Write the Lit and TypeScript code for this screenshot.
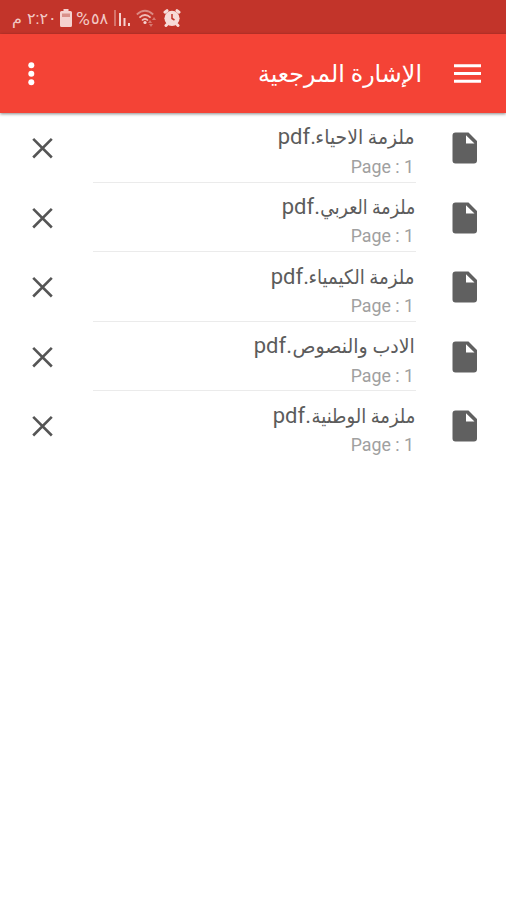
import { LitElement, html, css } from "lit";
import { customElement } from "lit/decorators.js";
import { styleMap } from "lit/directives/style-map.js";

interface Entry { name: string; width: number; scale: number; page: number }

// width: room taken by the Arabic part of the name; scale: its horizontal condensing
const FILES: Entry[] = [
  { name: "ملزمة الاحياء", width: 99, scale: 0.94, page: 1 },
  { name: "ملزمة العربي", width: 95, scale: 0.87, page: 1 },
  { name: "ملزمة الكيمياء", width: 106, scale: 0.91, page: 1 },
  { name: "الادب والنصوص", width: 123, scale: 0.95, page: 1 },
  { name: "ملزمة الوطنية", width: 104, scale: 0.9, page: 1 },
];

@customElement("app-root")
export class AppRoot extends LitElement {
  static styles = css`
    :host { display: block; width: 506px; height: 900px; background: #fff; overflow: hidden; font-family: Roboto, "DejaVu Sans", sans-serif; }
    svg { display: block; flex: none; }
    .status { height: 34px; background: #c2342a; color: #f2c9c5; display: flex; align-items: center; padding: 2px 0 0 12px; box-sizing: border-box; white-space: nowrap; }
    .pm { width: 15px; font-size: 16px; }
    .time { width: 33px; font-size: 16px; }
    .battery { margin-right: 4px; }
    .charge { width: 38px; display: flex; align-items: center; font-size: 16px; }
    .percent { width: 15px; font-size: 19px; }
    .signal { margin-right: 5px; }
    .wifi { margin-right: 6px; }
    .bar { height: 79px; background: #f44336; box-shadow: 0 1px 3px #0007; display: flex; align-items: center; color: #fff; position: relative; padding: 0 25px 0 27px; box-sizing: border-box; }
    .title { flex: 1; font-size: 23.8px; line-height: 30px; text-align: right; padding-right: 32px; }
    .row { display: grid; grid-template-columns: 93px 323px 90px; height: 69.6px; }
    .close { margin: 24px 0 0 32px; }
    .doc { margin: 19px 0 0 36px; }
    .info { border-bottom: 1px solid #ebebeb; box-sizing: border-box; padding: 9.4px 1px 0 0; }
    .row:last-child .info { border-bottom: 0; }
    .name { display: flex; height: 30px; line-height: 30px; align-items: baseline; color: #5c5c5c; white-space: nowrap; }
    .arabic { font-size: 20px; display: block; }
    .stretch { display: inline-block; transform-origin: right; }
    .ext { font-size: 22px; }
    .page { font-size: 17.8px; line-height: 24px; height: 24px; margin-top: 2.4px; text-align: right; color: #a0a0a0; padding-right: 1px; }
  `;
  private row(f: Entry) {
    return html`
      <div class="row">
        <svg class="close" width="21" height="22" viewBox="0 0 21 22"><path d="M1.200 1.900 19.800 20.500M19.800 1.900 1.200 20.500" fill="none" stroke="#555" stroke-width="2.600"/></svg>
        <div class="info">
          <div class="name" dir="rtl">
            <span class="arabic" style=${styleMap({ width: `${f.width}px` })}><span class="stretch" style=${styleMap({ transform: `scaleX(${f.scale})` })}>${f.name}</span></span><span class="ext">.pdf</span>
          </div>
          <div class="page">Page : ${f.page}</div>
        </div>
        <svg class="doc" width="26" height="32" viewBox="0 0 26 32"><path fill-rule="evenodd" fill="#606060" d="M3.500.500H16.500L25 9V28.500Q25 31.500 22 31.500H3.500Q.500 31.500 .500 28.500V3.500Q.500.500 3.500.500ZM14 3.300V11.500H22.500Z"/></svg>
      </div>`;
  }
  render() {
    return html`
      <div class="status">
        <span class="pm">م</span><span class="time">٢:٢٠</span>
        <svg class="battery" width="12" height="18" viewBox="0 0 12 18"><path fill="#f5d2cf" d="M3.500 0H8.500V2H10.500Q12 2 12 3.500V16.500Q12 18 10.500 18H1.500Q0 18 0 16.500V3.500Q0 2 1.500 2H3.500Z"/><path fill="#d99089" d="M2 4.500H10V8H2Z"/></svg>
        <span class="charge"><span class="percent">%</span><span>٥٨</span></span>
        <svg class="signal" width="17" height="18" viewBox="0 0 17 18"><path stroke="#dc8a83" stroke-width="1.500" d="M1 1V17"/><path stroke="#f5d2cf" stroke-width="2" d="M6 4V17M10.500 9V17M15 14V17"/></svg>
        <svg class="wifi" width="21" height="18" viewBox="0 0 21 18"><g fill="none" stroke="#efbcb7" stroke-width="1.700"><path stroke="#dc8a83" d="M.8 5.500Q9 -2 17.200 5.500"/><path d="M3.400 8.700Q9 3.300 14.600 8.700M6 11.500Q9 8.500 12 11.500"/></g><circle cx="9" cy="13.500" r="1.600" fill="#f5d2cf"/><path fill="#d8786f" d="M12 14l2-3 2 3ZM13 15h4l-2 3ZM18 8l2 3h-4Z"/></svg>
        <svg width="18" height="18" viewBox="0 0 18 18"><g stroke="#f7dbd8" stroke-width="3" stroke-linecap="round"><path d="M2 3.200 4 1.700M16 3.200 14 1.700M4 15.500 3 16.500M14 15.500 15 16.500"/></g><circle cx="9" cy="9.300" r="7.600" fill="#f7dbd8"/><path d="M9 5V9.500L11.500 11" fill="none" stroke="#c2342a" stroke-width="1.500"/></svg>
      </div>
      <div class="bar">
        <svg width="9" height="24" viewBox="0 0 9 24" fill="#fff"><circle cx="4.300" cy="3.300" r="3"/><circle cx="4.300" cy="11.800" r="3"/><circle cx="4.300" cy="20.200" r="3"/></svg>
        <span class="title" dir="rtl">الإشارة المرجعية</span>
        <svg width="27" height="20" viewBox="0 0 27 20"><path stroke="#fff" stroke-width="3" d="M0 1.800H27M0 9.500H27M0 17.200H27"/></svg>
      </div>
      ${FILES.map((f) => this.row(f))}
    `;
  }
}
